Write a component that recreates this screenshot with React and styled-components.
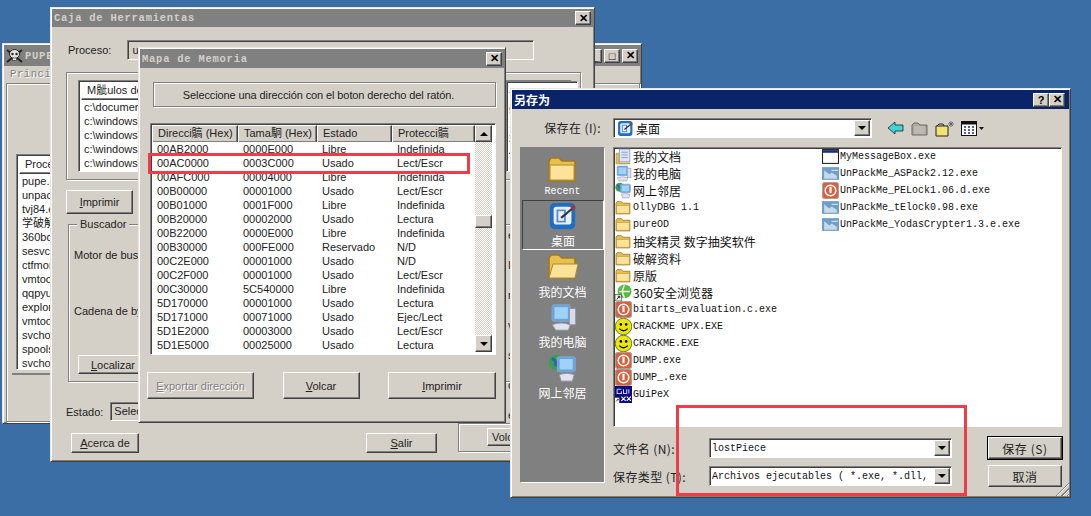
import React from 'react'
import styled, { createGlobalStyle, css } from 'styled-components'

const GlobalStyle = createGlobalStyle`
    html, body { margin: 0; padding: 0; width: 1091px; height: 516px; overflow: hidden; }
    body { background: #3a6ea5; font-family: "Liberation Sans", "Noto Sans CJK TC", Arial, sans-serif; }
`

const FACE = '#d4d0c8'
const raised = css`
    border: 1px solid;
    border-color: #ffffff #404040 #404040 #ffffff;
    box-shadow: inset -1px -1px 0 #808080;
`
const sunken = css`
    border: 1px solid;
    border-color: #808080 #ffffff #ffffff #808080;
    box-shadow: inset 1px 1px 0 #404040;
`
const etched = css`
    border: 1px solid #808080;
    box-shadow: 1px 1px 0 #ffffff, inset 1px 1px 0 #ffffff;
`

const Desktop = styled.div`
    position: relative;
    width: 1091px;
    height: 516px;
    overflow: hidden;
    background: #3a6ea5;
`

const Window = styled.div`
    position: absolute;
    left: ${p => p.$x}px;
    top: ${p => p.$y}px;
    width: ${p => p.$w}px;
    height: ${p => p.$h}px;
    box-sizing: border-box;
    background: ${FACE};
    border: 1px solid;
    border-color: #e8e6e0 #404040 #404040 #e8e6e0;
    box-shadow: inset 1px 1px 0 #ffffff, inset -1px -1px 0 #808080;
    padding: 1px;
    display: flex;
    flex-direction: column;
    overflow: hidden;
    color: #222;
    font-size: 11px;
`

const TitleBar = styled.div`
    flex: none;
    height: ${p => p.$h || 18}px;
    display: flex;
    align-items: center;
    gap: ${p => (p.$active ? 0 : 2)}px;
    padding: 0 ${p => (p.$active ? 4 : 2)}px 0 2px;
    background: ${p => (p.$active ? '#0a246a' : '#808080')};
    color: ${p => (p.$active ? '#ffffff' : FACE)};
    font: bold 10.5px "Liberation Mono", monospace;
    letter-spacing: 0.75px;
    white-space: nowrap;
`

const CjkTitle = styled.span`
    font: bold 12px "Noto Sans CJK SC", sans-serif;
    letter-spacing: 0;
`

const Spacer = styled.div`
    flex: 1;
`

const CapButton = styled.div`
    ${raised}
    flex: none;
    box-sizing: border-box;
    width: 16px;
    height: 14px;
    background: ${FACE};
    color: #000;
    display: flex;
    align-items: center;
    justify-content: center;
    font: bold 11px "Liberation Sans", sans-serif;
    letter-spacing: 0;
`

const Button = styled.div`
    ${raised}
    box-sizing: border-box;
    flex: none;
    width: ${p => p.$w}px;
    height: ${p => p.$h || 19}px;
    background: ${FACE};
    display: flex;
    align-items: center;
    justify-content: center;
    font-size: 11px;
    white-space: nowrap;
    color: ${p => (p.$disabled ? '#808080' : '#222')};
    text-shadow: ${p => (p.$disabled ? '1px 1px 0 #fff' : 'none')};
    ${p => p.$default && css`
        outline: 1px solid #000;
    `}
    u { text-underline-offset: 1px; }
`

const DialogButton = styled(Button)`
    font-family: "Noto Sans CJK SC", sans-serif;
    font-size: 12px;
    letter-spacing: 0.6px;
`

const PrintButton = styled(Button)`
    margin-top: 10px;
`

const LocateButton = styled(Button)`
    margin-left: 4px;
`

const ExitButton = styled(Button)`
    margin-left: 227px;
`

const SideVolcarButton = styled(Button)`
    margin-left: 28px;
    justify-content: flex-start;
    padding-left: 4px;
`

const Cell = styled.div`
    white-space: nowrap;
    overflow: hidden;
    padding-left: 5px;
`

const HeaderCell = styled.div`
    ${raised}
    box-sizing: border-box;
    height: 18px;
    line-height: 15px;
    padding-left: 5px;
    white-space: nowrap;
    overflow: hidden;
`

const ListBox = styled.div`
    ${sunken}
    box-sizing: border-box;
    background: #fff;
    overflow: hidden;
    flex: none;
    width: ${p => p.$w}px;
    height: ${p => p.$h}px;
    padding: 1px 0 0 2px;
`

const ListRow = styled.div`
    height: ${p => p.$step || 14}px;
    line-height: ${p => p.$step || 14}px;
    padding-left: 3px;
    white-space: nowrap;
    overflow: hidden;
`

/* PUPE window behind everything */

const PupeMenu = styled.div`
    flex: none;
    height: 17px;
    padding-left: 6px;
    color: #808080;
    text-shadow: 1px 1px 0 #fff;
    font: 10.5px/17px "Liberation Mono", monospace;
    letter-spacing: 0.6px;
`

const PupeBody = styled.div`
    ${etched}
    flex: 1;
    margin-left: 2px;
    padding: 70px 0 0 9px;
`

const PupeGroup = styled.div`
    border-bottom: 2px solid #808080;
    padding: 0 0 3px 4px;
    margin-left: -4px;
`

/* Caja de Herramientas */

const CajaBody = styled.div`
    flex: 1;
    display: flex;
    flex-direction: column;
    padding: 13px 12px 0 14px;
    position: relative;
`

const ProcessRow = styled.div`
    display: flex;
    align-items: center;
    height: 20px;
    gap: 16px;
    padding-left: 2px;
`

const ProcessField = styled.div`
    ${sunken}
    box-sizing: border-box;
    width: 407px;
    height: 20px;
    padding: 3px 0 0 4px;
    background: ${FACE};
`

const ModuleGroup = styled.div`
    ${etched}
    box-sizing: border-box;
    height: 108px;
    width: 515px;
    margin-top: 12px;
    padding: 7px 0 0 11px;
`

const ModuleHeader = styled.div`
    display: grid;
    grid-template-columns: 427px 48px 17px;
`

const GroupBox = styled.div`
    ${etched}
    position: relative;
    box-sizing: border-box;
    width: 514px;
    height: 158px;
    margin: 10px 0 0 2px;
    padding: 24px 0 0 5px;
`

const GroupLegend = styled.span`
    position: absolute;
    left: 8px;
    top: -7px;
    padding: 0 3px;
    background: ${FACE};
`

const GroupLabel = styled.div`
    height: ${p => p.$h}px;
`

const StateRow = styled.div`
    display: flex;
    align-items: center;
    gap: 7px;
    height: 19px;
    margin-top: 20px;
`

const StateField = styled.div`
    ${sunken}
    box-sizing: border-box;
    width: 120px;
    height: 19px;
    padding: 2px 0 0 3px;
`

const CajaFooter = styled.div`
    display: flex;
    margin: 12px 0 0 5px;
`

/* the narrow part of the toolbox that still shows between the two top windows */
const SideColumn = styled.div`
    position: absolute;
    left: 406px;
    top: 54px;
    width: 120px;
    height: 371px;
    display: flex;
    flex-direction: column;
`

const SideList = styled.div`
    ${sunken}
    box-sizing: border-box;
    height: 91px;
    margin-left: 48px;
    background: #fff;
    padding-top: 7px;
    flex: none;
`

const SideFragments = styled.div`
    flex: none;
    height: 203px;
    margin: 48px 0 0 48px;
    overflow: hidden;
`

const SideRow = styled.div`
    height: ${p => p.$step}px;
    line-height: ${p => p.$step}px;
    padding-left: 2px;
`

const SideVolcar = styled.div`
    ${etched}
    box-sizing: border-box;
    flex: none;
    width: 120px;
    height: 29px;
    padding-top: 4px;
`

/* Mapa de Memoria */

const MapBody = styled.div`
    flex: 1;
    display: flex;
    flex-direction: column;
    padding: 14px 8px 0 13px;
`

const HintBox = styled.div`
    ${etched}
    box-sizing: border-box;
    height: 25px;
    padding-right: 12px;
    display: flex;
    align-items: center;
    justify-content: center;
    letter-spacing: -0.1px;
`

const MemoryFrame = styled.div`
    ${sunken}
    position: relative;
    box-sizing: border-box;
    height: 232px;
    margin: 16px 0 0 -3px;
    padding: 1px 3px 2px 1px;
    background: #fff;
    display: flex;
    overflow: hidden;
`

const MemoryColumns = styled.div`
    flex: 1;
    min-width: 0;
    overflow: hidden;
`

const memoryGrid = css`
    display: grid;
    grid-template-columns: 86px 79px 75px 1fr;
`

const MemoryHeader = styled.div`
    ${memoryGrid}
    height: 17px;
    overflow: hidden;
    background: ${FACE};
`

const MemoryRow = styled.div`
    ${memoryGrid}
    height: 14px;
    line-height: 14px;
`

const Scrollbar = styled.div`
    position: relative;
    flex: none;
    width: 17px;
    display: flex;
    flex-direction: column;
    justify-content: space-between;
    background-color: #eeeeea;
    background-image: repeating-conic-gradient(${FACE} 0 25%, #fff 0 50%);
    background-size: 2px 2px;
`

const ScrollArrow = styled.div`
    ${raised}
    box-sizing: border-box;
    width: 17px;
    height: 17px;
    background: ${FACE};
    display: flex;
    align-items: center;
    justify-content: center;
`

const ScrollThumb = styled(ScrollArrow)`
    position: absolute;
    top: 90px;
    height: 13px;
`

const Arrow = styled.div`
    width: 0;
    height: 0;
    border-left: 4px solid transparent;
    border-right: 4px solid transparent;
    ${p => (p.$up
        ? 'border-bottom: 4px solid #000;'
        : 'border-top: 4px solid #000;')}
`

const MapButtons = styled.div`
    display: flex;
    justify-content: space-between;
    margin: 17px 0 0 -6px;
`

const Highlight = styled.div`
    position: absolute;
    left: ${p => p.$x}px;
    top: ${p => p.$y}px;
    width: ${p => p.$w}px;
    height: ${p => p.$h}px;
    box-sizing: border-box;
    border: 3px solid #ee3d48;
    pointer-events: none;
`

/* Save dialog */

const SaveBody = styled.div`
    flex: 1;
    display: grid;
    grid-template-columns: 93px 1fr;
    grid-template-rows: 38px 280px 1fr;
    padding: 0 5px 0 8px;
    font: 10px "Liberation Mono", monospace;
`

const SaveInLabel = styled.div`
    font: 12px "Noto Sans CJK SC", sans-serif;
    letter-spacing: 0.4px;
    text-align: right;
    padding: 10px 12px 0 0;
    color: #222;
    white-space: nowrap;
`

const SaveToolbar = styled.div`
    display: flex;
    align-items: flex-end;
    padding-bottom: 9px;
`

const Combo = styled.div`
    ${sunken}
    box-sizing: border-box;
    width: ${p => p.$w}px;
    height: ${p => p.$h || 20}px;
    background: #fff;
    display: flex;
    align-items: center;
    justify-content: space-between;
    padding-left: ${p => p.$pad || 2}px;
    color: #111;
    overflow: hidden;
    white-space: nowrap;
    flex: none;
`

const ComboText = styled.span`
    display: flex;
    align-items: center;
    gap: 2px;
    overflow: hidden;
    font: ${p => (p.$cjk ? '12px "Noto Sans CJK SC", sans-serif' : '10px "Liberation Mono", monospace')};
`

const ComboArrow = styled(ScrollArrow)`
    flex: none;
    width: 16px;
    height: 16px;
    margin-right: 1px;
`

const ToolIcons = styled.div`
    display: flex;
    align-items: center;
    gap: 6px;
    margin-left: 15px;
    height: 20px;
`

const PlacesBar = styled.div`
    ${sunken}
    box-shadow: none;
    box-sizing: border-box;
    grid-row: 2 / 4;
    width: 85px;
    height: 336px;
    background: #808080;
    display: flex;
    flex-direction: column;
`

const Place = styled.div`
    flex: none;
    box-sizing: border-box;
    height: ${p => p.$h}px;
    display: flex;
    flex-direction: column;
    align-items: center;
    justify-content: flex-end;
    gap: 1px;
    padding-bottom: 3px;
    color: #fff;
    font: ${p => (p.$mono ? '10px "Liberation Mono", monospace' : '12px "Noto Sans CJK SC", sans-serif')};
    ${p => p.$selected && css`
        border: 1px solid;
        border-color: #404040 #fff #fff #404040;
        margin-left: 1px;
        padding-bottom: 0;
    `}
`

const FileList = styled.div`
    ${sunken}
    box-sizing: border-box;
    background: #fff;
    display: grid;
    grid-template-columns: 207px 1fr;
    width: 449px;
    height: 280px;
`

const FileColumn = styled.div`
    display: flex;
    flex-direction: column;
`

const FileRow = styled.div`
    display: flex;
    align-items: center;
    gap: 1px;
    height: 17px;
    padding-left: 1px;
    color: #111;
    white-space: nowrap;
    font: ${p => (p.$cjk ? '12px "Noto Sans CJK SC", sans-serif' : '10px "Liberation Mono", monospace')};
`

const SaveFields = styled.div`
    display: grid;
    grid-template-columns: 96px 243px 1fr;
    grid-auto-rows: 28px;
    align-items: center;
    padding-top: 7px;
`

const FieldLabel = styled.div`
    font: 12px "Noto Sans CJK SC", sans-serif;
    letter-spacing: 0.4px;
    color: #222;
    white-space: nowrap;
`

const Grip = styled.div`
    position: absolute;
    right: 1px;
    bottom: 1px;
    width: 14px;
    height: 14px;
    background: repeating-linear-gradient(135deg, transparent 0 2px, #808080 2px 3px, #fff 3px 4px);
    clip-path: polygon(100% 0, 100% 100%, 0 100%);
`

const DialogAction = styled.div`
    padding-left: 36px;
`

const memoryRows = [
    ['00AB2000', '0000E000', 'Libre', 'Indefinida'],
    ['00AC0000', '0003C000', 'Usado', 'Lect/Escr'],
    ['00AFC000', '00004000', 'Libre', 'Indefinida'],
    ['00B00000', '00001000', 'Usado', 'Lect/Escr'],
    ['00B01000', '0001F000', 'Libre', 'Indefinida'],
    ['00B20000', '00002000', 'Usado', 'Lectura'],
    ['00B22000', '0000E000', 'Libre', 'Indefinida'],
    ['00B30000', '000FE000', 'Reservado', 'N/D'],
    ['00C2E000', '00001000', 'Usado', 'N/D'],
    ['00C2F000', '00001000', 'Usado', 'Lect/Escr'],
    ['00C30000', '5C540000', 'Libre', 'Indefinida'],
    ['5D170000', '00001000', 'Usado', 'Lectura'],
    ['5D171000', '00071000', 'Usado', 'Ejec/Lect'],
    ['5D1E2000', '00003000', 'Usado', 'Lect/Escr'],
    ['5D1E5000', '00025000', 'Usado', 'Lectura'],
]

const processes = ['pupe.exe', 'unpack.exe', 'tvj84.exe', '学破解.exe', '360bdoctor.exe', 'sesvc.exe', 'ctfmon.exe', 'vmtoolsd.exe', 'qqpyusrmon.exe', 'explorer.exe', 'vmtoolsd.exe', 'svchost.exe', 'spoolsv.exe', 'svchost.exe']

const modules = ['c:\\documents', 'c:\\windows\\system32', 'c:\\windows\\system32', 'c:\\windows\\system32', 'c:\\windows\\system32']

const FolderIcon = ({ size = 17, open }) => (
    <svg width={size} height={size} viewBox="0 0 16 16">
        <path d="M1 4 L2 2.5 H6 L7.5 4 H14 V14 H1 Z" fill="#e8c050" stroke="#a07820" strokeWidth="0.8" />
        <path d={open ? 'M1 14 L3 7 H15.5 L14 14 Z' : 'M1.5 6 H13.5 V13.5 H1.5 Z'} fill="#fbe39a" stroke="#b08a2a" strokeWidth="0.5" />
    </svg>
)

const ExeIcon = () => (
    <svg width="17" height="17" viewBox="0 0 16 16">
        <rect x="0.5" y="0.5" width="15" height="15" rx="2" fill="#d8603c" stroke="#a9a09a" />
        <circle cx="8" cy="8" r="5" fill="none" stroke="#fff" strokeWidth="1.4" />
        <rect x="7" y="4.5" width="2" height="6" fill="#fff" />
    </svg>
)

const SmileyIcon = () => (
    <svg width="17" height="17" viewBox="0 0 16 16">
        <rect width="16" height="16" fill="#fff" />
        <circle cx="8" cy="8" r="7.8" fill="#e8e800" stroke="#000" strokeWidth="0.5" />
        <circle cx="5.5" cy="6" r="1.2" fill="#000" />
        <circle cx="10.5" cy="6" r="1.2" fill="#000" />
        <path d="M4 10 Q8 14 12 10" fill="none" stroke="#000" strokeWidth="1.2" />
    </svg>
)

const PackedIcon = () => (
    <svg width="17" height="17" viewBox="0 0 16 16">
        <rect x="0" y="2" width="16" height="12" fill="#6f9fc8" />
        <path d="M2 5 L7 9 L9 7 L14 10 V13 H2 Z" fill="#c9d9e8" />
        <path d="M9 5 H15" stroke="#dfe9f2" strokeWidth="1" />
    </svg>
)

const WindowIcon = () => (
    <svg width="17" height="17" viewBox="0 0 16 16">
        <rect x="0.5" y="1.5" width="15" height="13" fill="#fff" stroke="#222" />
        <rect x="1" y="2" width="14" height="2.5" fill="#15307c" />
    </svg>
)

const GuipexIcon = () => (
    <svg width="17" height="17" viewBox="0 0 16 16">
        <rect width="16" height="16" fill="#0a0a7a" />
        <path d="M2 3 H6 M2 3 V7 H6 V5 M8 3 V7 H11 V3 M13 3 V7" stroke="#c8c8ff" fill="none" />
        <path d="M6 10 L10 14 M10 10 L6 14 M11 10 L15 14 M15 10 L11 14" stroke="#fff" />
        <path d="M0 11 H4 V16 H0 Z" fill="#fff" />
        <path d="M1 14.5 L3 12.5 M2 12.5 H3 V13.5" stroke="#000" strokeWidth="0.7" fill="none" />
    </svg>
)

const BrowserIcon = () => (
    <svg width="17" height="17" viewBox="0 0 16 16">
        <circle cx="9" cy="7" r="6.5" fill="#58b848" />
        <path d="M4 7 H14 M9 1 Q5 7 9 13" stroke="#e8f5e0" strokeWidth="1.4" fill="none" />
        <path d="M0 10 H6 V16 H0 Z" fill="#fff" stroke="#222" strokeWidth="0.6" />
        <path d="M1.5 14.5 L4.2 11.8 M2.6 11.6 H4.4 V13.4" stroke="#000" strokeWidth="0.8" fill="none" />
    </svg>
)

const DocsIcon = ({ size = 17 }) => (
    <svg width={size} height={size} viewBox="0 0 16 16">
        <path d="M1 5 H4 V14 H14 V15 H1 Z" fill="#e8c050" stroke="#a07820" strokeWidth="0.5" />
        <rect x="4" y="1" width="10" height="12" fill="#dce7f5" stroke="#7a93bd" strokeWidth="0.7" />
        <path d="M6 4 H12 M6 6.5 H12 M6 9 H12" stroke="#7a93bd" strokeWidth="0.8" />
    </svg>
)

const ComputerIcon = ({ size = 17 }) => (
    <svg width={size} height={size} viewBox="0 0 16 16">
        <rect x="2" y="1" width="10" height="9" rx="1" fill="#5fa7e4" stroke="#8ba2bd" strokeWidth="0.6" />
        <rect x="3.3" y="2.3" width="7.4" height="6.4" fill="#9fd2f5" />
        <rect x="11.5" y="3" width="3.5" height="9" fill="#d8dcea" stroke="#8b90a5" strokeWidth="0.5" />
        <path d="M2 12 Q7 10 12 12 L11 15 H4 Z" fill="#dfe3ee" stroke="#8b90a5" strokeWidth="0.5" />
    </svg>
)

const NetworkIcon = ({ size = 17 }) => (
    <svg width={size} height={size} viewBox="0 0 16 16">
        <circle cx="4.5" cy="5" r="4.2" fill="#3f9c54" />
        <path d="M2 3 Q5 4 4 7" stroke="#2b62b8" strokeWidth="1.6" fill="none" />
        <rect x="5" y="2" width="9.5" height="8" rx="1" fill="#5fa7e4" stroke="#8ba2bd" strokeWidth="0.6" />
        <rect x="6.2" y="3.2" width="7" height="5.6" fill="#9fd2f5" />
        <path d="M6 11.5 Q10 10 14 11.5 L13 15 H7 Z" fill="#dfe3ee" stroke="#8b90a5" strokeWidth="0.5" />
    </svg>
)

const DesktopIcon = ({ size = 17 }) => (
    <svg width={size} height={size} viewBox="0 0 16 16">
        <rect x="1" y="1" width="13.5" height="14" rx="2.5" fill="#1e6fc4" />
        <rect x="3" y="3" width="9.5" height="9.5" rx="1.5" fill="#e6f0fa" />
        <path d="M5 5 H9 V11 H5 Z" fill="none" stroke="#5c8fc8" />
        <path d="M7 9 L13 4" stroke="#334" strokeWidth="1.2" />
        <circle cx="13.5" cy="3.5" r="1.2" fill="#a33" />
    </svg>
)

const SkullIcon = () => (
    <svg width="17" height="16" viewBox="0 0 17 16">
        <path d="M1 2 L16 14 M16 2 L1 14" stroke="#222" strokeWidth="2" />
        <ellipse cx="8.5" cy="6" rx="5" ry="4.5" fill="#e8e6e0" stroke="#222" />
        <circle cx="6.5" cy="6" r="1.2" fill="#222" />
        <circle cx="10.5" cy="6" r="1.2" fill="#222" />
        <rect x="6.5" y="10" width="4" height="2.5" fill="#e8e6e0" stroke="#222" strokeWidth="0.6" />
    </svg>
)

const BackIcon = () => (
    <svg width="18" height="14" viewBox="0 0 18 14">
        <path d="M1 7 L8 1 V4 H16 V10 H8 V13 Z" fill="#38d8d8" stroke="#222" strokeWidth="0.8" />
    </svg>
)

const UpFolderIcon = () => (
    <svg width="18" height="15" viewBox="0 0 18 15">
        <path d="M1 4 L3 2 H7 L9 4 H16 V14 H1 Z" fill="#a8a69f" stroke="#6c6a64" />
        <path d="M3 6 H14 M3 8 H14 M3 10 H14 M3 12 H14" stroke="#cfcdc6" />
    </svg>
)

const NewFolderIcon = () => (
    <svg width="20" height="17" viewBox="0 0 20 17">
        <path d="M1 6 H13 V16 H1 Z" fill="#f2e270" stroke="#222" />
        <path d="M2 6 L4 4 H8 L9 6" fill="none" stroke="#222" />
        <path d="M16 1 V7 M13 4 H19 M14 2 L18 6 M18 2 L14 6" stroke="#555" strokeWidth="0.8" />
    </svg>
)

const ViewsIcon = () => (
    <svg width="24" height="15" viewBox="0 0 24 15">
        <rect x="0.5" y="0.5" width="15" height="14" fill="#fff" stroke="#111" />
        <rect x="1" y="1" width="14" height="2.5" fill="#111" />
        <path d="M3 6 H5 M7 6 H9 M11 6 H13 M3 9 H5 M7 9 H9 M11 9 H13 M3 12 H5 M7 12 H9 M11 12 H13" stroke="#15307c" strokeWidth="1.4" />
        <path d="M18 6 H23 L20.5 9 Z" fill="#111" />
    </svg>
)

const leftFiles = [
    { icon: <DocsIcon />, name: '我的文档', cjk: true },
    { icon: <ComputerIcon />, name: '我的电脑', cjk: true },
    { icon: <NetworkIcon />, name: '网上邻居', cjk: true },
    { icon: <FolderIcon />, name: 'OllyDBG 1.1' },
    { icon: <FolderIcon />, name: 'pureOD' },
    { icon: <FolderIcon />, name: '抽奖精灵 数字抽奖软件', cjk: true },
    { icon: <FolderIcon />, name: '破解资料', cjk: true },
    { icon: <FolderIcon />, name: '原版', cjk: true },
    { icon: <BrowserIcon />, name: '360安全浏览器', cjk: true },
    { icon: <ExeIcon />, name: 'bitarts_evaluation.c.exe' },
    { icon: <SmileyIcon />, name: 'CRACKME UPX.EXE' },
    { icon: <SmileyIcon />, name: 'CRACKME.EXE' },
    { icon: <ExeIcon />, name: 'DUMP.exe' },
    { icon: <ExeIcon />, name: 'DUMP_.exe' },
    { icon: <GuipexIcon />, name: 'GUiPeX' },
]

const rightFiles = [
    { icon: <WindowIcon />, name: 'MyMessageBox.exe' },
    { icon: <PackedIcon />, name: 'UnPackMe_ASPack2.12.exe' },
    { icon: <ExeIcon />, name: 'UnPackMe_PELock1.06.d.exe' },
    { icon: <PackedIcon />, name: 'UnPackMe_tElock0.98.exe' },
    { icon: <PackedIcon />, name: 'UnPackMe_YodasCrypter1.3.e.exe' },
]

const FileEntries = ({ files }) => (
    <FileColumn>
        {files.map(f => (
            <FileRow key={f.name} $cjk={f.cjk}>{f.icon}<span>{f.name}</span></FileRow>
        ))}
    </FileColumn>
)

const PupeWindow = () => (
    <Window $x={2} $y={43} $w={640} $h={381}>
        <TitleBar $h={21}>
            <SkullIcon />
            <span>PUPE</span>
            <Spacer />
            <CapButton>_</CapButton>
            <CapButton>□</CapButton>
            <CapButton>✕</CapButton>
        </TitleBar>
        <PupeMenu>Principal</PupeMenu>
        <PupeBody>
            <PupeGroup>
                <ListBox $w={150} $h={216}>
                    <HeaderCell>Proceso</HeaderCell>
                    {processes.map((p, i) => <ListRow key={i}>{p}</ListRow>)}
                </ListBox>
            </PupeGroup>
        </PupeBody>
    </Window>
)

const CajaWindow = () => (
    <Window $x={50} $y={7} $w={545} $h={455}>
        <TitleBar>
            <span>Caja de Herramientas</span>
            <Spacer />
            <CapButton>✕</CapButton>
        </TitleBar>
        <CajaBody>
            <ProcessRow>
                <span>Proceso:</span>
                <ProcessField>u</ProcessField>
            </ProcessRow>
            <ModuleGroup>
                <ListBox $w={494} $h={92}>
                    <ModuleHeader>
                        <HeaderCell>M骴ulos de</HeaderCell>
                        <HeaderCell />
                        <HeaderCell />
                    </ModuleHeader>
                    {modules.map((m, i) => <ListRow key={i}>{m}</ListRow>)}
                </ListBox>
            </ModuleGroup>
            <PrintButton $w={67} $h={24}><span><u>I</u>mprimir</span></PrintButton>
            <GroupBox>
                <GroupLegend>Buscador</GroupLegend>
                <GroupLabel $h={56}>Motor de busqueda</GroupLabel>
                <GroupLabel $h={50}>Cadena de bytes</GroupLabel>
                <LocateButton $w={70} $h={19}><span><u>L</u>ocalizar</span></LocateButton>
            </GroupBox>
            <StateRow>
                <span>Estado:</span>
                <StateField>Seleccione</StateField>
            </StateRow>
            <CajaFooter>
                <Button $w={68} $h={20}><span><u>A</u>cerca de</span></Button>
                <ExitButton $w={71} $h={20}><span><u>S</u>alir</span></ExitButton>
            </CajaFooter>
            <SideColumn>
                <SideList>
                    {['7', '9', '1', '2', '4'].map((c, i) => <SideRow key={i} $step={14}>{c}</SideRow>)}
                </SideList>
                <SideFragments>
                    {['e', 'I', 'r', 'v', 's', 'c', 'e'].map((c, i) => <SideRow key={i} $step={30}>{c}</SideRow>)}
                </SideFragments>
                <SideVolcar>
                    <SideVolcarButton $w={70} $h={18}>Volcar</SideVolcarButton>
                </SideVolcar>
            </SideColumn>
        </CajaBody>
    </Window>
)

const MapaWindow = () => (
    <Window $x={138} $y={47} $w={368} $h={376}>
        <TitleBar $h={19}>
            <span>Mapa de Memoria</span>
            <Spacer />
            <CapButton>✕</CapButton>
        </TitleBar>
        <MapBody>
            <HintBox>Seleccione una dirección con el boton derecho del ratón.</HintBox>
            <MemoryFrame>
                <MemoryColumns>
                    <MemoryHeader>
                        <HeaderCell>Direcci髇 (Hex)</HeaderCell>
                        <HeaderCell>Tama駉 (Hex)</HeaderCell>
                        <HeaderCell>Estado</HeaderCell>
                        <HeaderCell>Protecci髇</HeaderCell>
                    </MemoryHeader>
                    {memoryRows.map(r => (
                        <MemoryRow key={r[0]}>
                            {r.map((c, i) => <Cell key={i}>{c}</Cell>)}
                        </MemoryRow>
                    ))}
                </MemoryColumns>
                <Scrollbar>
                    <ScrollArrow><Arrow $up /></ScrollArrow>
                    <ScrollThumb />
                    <ScrollArrow><Arrow /></ScrollArrow>
                </Scrollbar>
            </MemoryFrame>
            <MapButtons>
                <Button $w={107} $h={27} $disabled><span><u>E</u>xportar dirección</span></Button>
                <Button $w={77} $h={27}><span><u>V</u>olcar</span></Button>
                <Button $w={108} $h={27}><span><u>I</u>mprimir</span></Button>
            </MapButtons>
        </MapBody>
    </Window>
)

const SaveWindow = () => (
    <Window $x={510} $y={88} $w={561} $h={410}>
        <TitleBar $active $h={19}>
            <CjkTitle>另存为</CjkTitle>
            <Spacer />
            <CapButton>?</CapButton>
            <CapButton>✕</CapButton>
        </TitleBar>
        <SaveBody>
            <SaveInLabel>保存在 (I):</SaveInLabel>
            <SaveToolbar>
                <Combo $w={259} $h={20} $pad={3}>
                    <ComboText $cjk><DesktopIcon />桌面</ComboText>
                    <ComboArrow><Arrow /></ComboArrow>
                </Combo>
                <ToolIcons>
                    <BackIcon />
                    <UpFolderIcon />
                    <NewFolderIcon />
                    <ViewsIcon />
                </ToolIcons>
            </SaveToolbar>
            <PlacesBar>
                <Place $h={52} $mono><FolderIcon size={32} />Recent</Place>
                <Place $h={50} $selected><DesktopIcon size={32} />桌面</Place>
                <Place $h={53}><FolderIcon size={34} open />我的文档</Place>
                <Place $h={50}><ComputerIcon size={34} />我的电脑</Place>
                <Place $h={51}><NetworkIcon size={34} />网上邻居</Place>
            </PlacesBar>
            <FileList>
                <FileEntries files={leftFiles} />
                <FileEntries files={rightFiles} />
            </FileList>
            <SaveFields>
                <FieldLabel>文件名 (N):</FieldLabel>
                <Combo $w={243} $h={20}>
                    <ComboText>lostPiece</ComboText>
                    <ComboArrow><Arrow /></ComboArrow>
                </Combo>
                <DialogAction><DialogButton $w={74} $h={22} $default>保存 (S)</DialogButton></DialogAction>
                <FieldLabel>保存类型 (T):</FieldLabel>
                <Combo $w={243} $h={20}>
                    <ComboText>Archivos ejecutables ( *.exe, *.dll, *.ocx)</ComboText>
                    <ComboArrow><Arrow /></ComboArrow>
                </Combo>
                <DialogAction><DialogButton $w={74} $h={22}>取消</DialogButton></DialogAction>
            </SaveFields>
        </SaveBody>
        <Grip />
    </Window>
)

export default function App() {
    return (
        <>
            <GlobalStyle />
            <Desktop>
                <PupeWindow />
                <CajaWindow />
                <MapaWindow />
                <SaveWindow />
                <Highlight $x={148} $y={153} $w={322} $h={21} />
                <Highlight $x={676} $y={405} $w={291} $h={91} />
            </Desktop>
        </>
    )
}
